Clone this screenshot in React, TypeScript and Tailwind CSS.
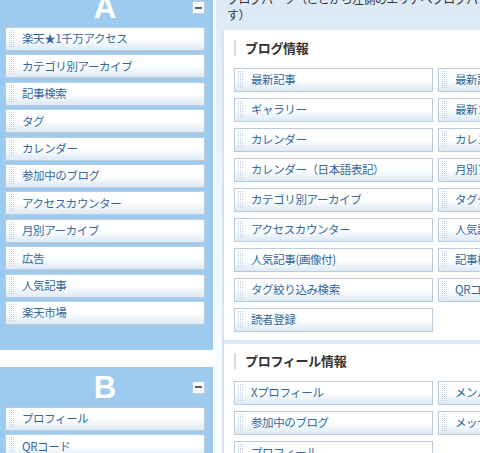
import React from 'react';

const sideA = [
  '楽天★1千万アクセス',
  'カテゴリ別アーカイブ',
  '記事検索',
  'タグ',
  'カレンダー',
  '参加中のブログ',
  'アクセスカウンター',
  '月別アーカイブ',
  '広告',
  '人気記事',
  '楽天市場',
];

const sideB = ['プロフィール', 'QRコード', 'メンバー'];

const blogParts = [
  '最新記事', '最新記事（画像付）',
  'ギャラリー', '最新コメント',
  'カレンダー', 'カレンダー（英語表記）',
  'カレンダー（日本語表記）', '月別アーカイブ',
  'カテゴリ別アーカイブ', 'タグクラウド',
  'アクセスカウンター', '人気記事',
  '人気記事(画像付)', '記事検索',
  'タグ絞り込み検索', 'QRコード',
  '読者登録',
];

const profileParts = [
  'Xプロフィール', 'メンバー一覧',
  '参加中のブログ', 'メッセージを送る',
  'プロフィール',
];

function Grip() {
  const dots = [];
  for (let r = 0; r < 9; r++) {
    for (let c = 0; c < 3; c++) {
      dots.push(<rect key={`${r}-${c}`} x={c * 2} y={r * 2} width="1" height="1" fill="#c6d1db" />);
    }
  }
  return (
    <svg width="6" height="18" viewBox="0 0 6 18" className="shrink-0">
      {dots}
    </svg>
  );
}

function Part({ label }: { label: string }) {
  return (
    <div className="flex h-[24px] items-center border border-[#bccbd9] bg-linear-to-b from-white via-white to-[#dce9f5] pl-[3px]">
      <Grip />
      <span className="ml-[7px] whitespace-nowrap text-[11.5px] tracking-[-0.4px] text-[#30679f]">{label}</span>
    </div>
  );
}

function MinusButton() {
  return (
    <div className="flex h-[13px] w-[13px] items-center justify-center border border-[#b8cde0] bg-[#f7fafd]">
      <div className="h-[2px] w-[7px] bg-[#56636f]" />
    </div>
  );
}

function SidePanel({ letter, items }: { letter: string; items: string[] }) {
  return (
    <div className="bg-[#9dcbef] pb-[25px]">
      <div className="flex h-[40px] items-center pl-[5px] pr-[8px] pt-[1px]">
        <div className="w-[13px]" />
        <div className="flex-1 text-center font-['Liberation_Sans',Arial,sans-serif] text-[31px] font-bold leading-none text-white">
          {letter}
        </div>
        <MinusButton />
      </div>
      <div className="flex flex-col gap-[3.4px] pl-[5px] pr-[8px]">
        {items.map((item) => (
          <Part key={item} label={item} />
        ))}
      </div>
    </div>
  );
}

function Section({ title, parts }: { title: string; parts: string[] }) {
  return (
    <div className="pl-[10px]">
      <div className="flex h-[16px] items-center">
        <div className="h-[16px] w-[2px] bg-[#cfdde9]" />
        <h2 className="ml-[9px] whitespace-nowrap text-[13px] font-bold tracking-[-0.3px] text-[#333]">{title}</h2>
      </div>
      <div className="mt-[12px] grid grid-cols-[199px_199px] gap-x-[5px] gap-y-[6px]">
        {parts.map((p) => (
          <Part key={p} label={p} />
        ))}
      </div>
    </div>
  );
}

export default function App() {
  return (
    <div className="h-[453px] w-[480px] overflow-hidden bg-white font-['Noto_Sans_CJK_JP','Noto_Sans',sans-serif]">
      <div className="-mt-[13px] flex">
        <div className="w-[213px] shrink-0">
          <SidePanel letter="A" items={sideA} />
          <div className="h-[17px]" />
          <SidePanel letter="B" items={sideB} />
        </div>

        <div className="ml-[3px] min-w-0 flex-1 bg-linear-to-b from-[#dbe9f6] via-[#eef5fb] via-40% to-white pl-[6px]">
          <div className="-ml-[6px] pb-[7px] pl-[11px] pt-[4px] text-[12px] leading-[16px] tracking-[-0.6px] text-[#333]">
            <p className="whitespace-nowrap">ブログパーツ（ここから左側のエリアへブログパーツをドラッグすると追加できま</p>
            <p className="whitespace-nowrap">す）</p>
          </div>
          <div className="border-l-2 border-[#d3e3f1] bg-white">
            <div className="pb-[8px] pt-[10px]">
              <Section title="ブログ情報" parts={blogParts} />
            </div>
            <div className="h-[4px] bg-[#dceaf6]" />
            <div className="pb-[20px] pt-[9px]">
              <Section title="プロフィール情報" parts={profileParts} />
            </div>
          </div>
        </div>
      </div>
    </div>
  );
}
